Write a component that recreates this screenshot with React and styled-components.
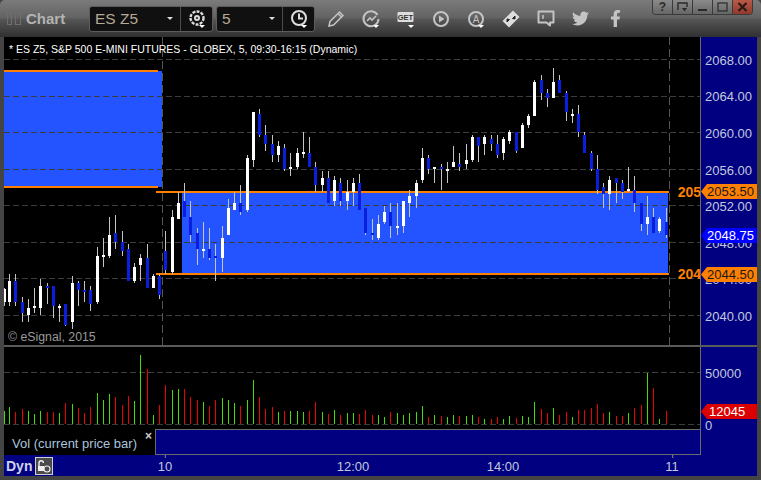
// App.jsx
import React from 'react';
import styled, { createGlobalStyle } from 'styled-components';
import { FaTwitter, FaFacebookF } from 'react-icons/fa';

const GlobalStyle = createGlobalStyle`
  html, body {
    margin: 0;
    padding: 0;
    background: #444;
    font-family: "Liberation Sans", Arial, sans-serif;
  }
`;

// candles as read off the chart: [x, wickTop, wickBottom, bodyTop, bodyBottom, up]
const toCandles = (x0, y0, rows) =>
  rows.map(([x, wt, wb, bt, bb, up]) => ({
    col: Math.floor(x0 + x / 3),
    wickTop: Math.round(y0 + wt / 3),
    wickBottom: Math.round(y0 + wb / 3),
    bodyTop: Math.round(y0 + bt / 3),
    bodyBottom: Math.round(y0 + bb / 3),
    up,
  }));

const candles = [
  ...toCandles(0, 180, [
    [14, 327, 380, 330, 370, 1], [28, 285, 380, 306, 369, 1], [46, 285, 380, 306, 369, 0],
    [67, 354, 429, 369, 402, 0], [85, 360, 429, 387, 408, 1], [103, 327, 402, 381, 387, 1],
    [121, 300, 408, 321, 387, 1], [142, 312, 375, 321, 327, 0], [160, 321, 417, 321, 381, 0],
    [178, 375, 429, 381, 387, 1], [196, 375, 441, 375, 438, 0], [217, 291, 450, 312, 429, 1],
    [235, 306, 381, 312, 333, 0], [253, 306, 369, 333, 339, 0], [271, 321, 396, 333, 375, 0],
    [292, 205, 375, 231, 369, 1], [310, 178, 264, 228, 234, 1], [328, 114, 237, 168, 231, 1],
    [346, 108, 210, 162, 190, 0], [367, 156, 231, 189, 216, 0], [385, 195, 306, 210, 306, 0],
    [403, 252, 312, 264, 306, 1], [421, 225, 306, 237, 258, 1], [442, 195, 327, 237, 327, 0],
    [460, 285, 327, 291, 327, 1], [478, 285, 360, 291, 348, 0], [496, 156, 285, 216, 273, 0],
    [517, 93, 285, 114, 279, 1], [535, 39, 120, 72, 120, 1], [553, 12, 115, 66, 114, 0],
    [571, 66, 190, 114, 168, 0], [592, 147, 258, 162, 210, 0], [610, 129, 237, 210, 216, 1],
    [628, 147, 243, 210, 237, 0], [646, 195, 306, 231, 237, 0], [667, 141, 279, 177, 237, 1],
    [685, 60, 168, 87, 168, 1], [703, 39, 93, 72, 93, 1],
  ]),
  ...toCandles(240, 70, [
    [2, 348, 438, 402, 429, 0], [22, 258, 429, 267, 423, 1], [40, 129, 294, 129, 273, 1],
    [58, 120, 204, 135, 198, 0], [76, 168, 246, 198, 225, 0], [97, 198, 279, 225, 258, 0],
    [115, 216, 279, 231, 258, 1], [133, 225, 306, 237, 300, 0], [151, 252, 321, 294, 300, 1],
    [172, 237, 300, 252, 294, 1], [190, 190, 267, 249, 255, 1], [208, 204, 294, 252, 294, 0],
    [226, 279, 369, 294, 348, 0], [247, 306, 369, 327, 348, 1], [265, 306, 402, 327, 402, 0],
    [283, 321, 411, 333, 396, 1], [301, 327, 411, 342, 396, 0], [322, 333, 423, 369, 396, 1],
    [340, 327, 411, 342, 369, 1], [358, 315, 423, 342, 423, 0], [376, 417, 498, 417, 492, 0],
    [397, 450, 513, 492, 498, 0], [415, 438, 513, 465, 507, 1], [433, 411, 465, 429, 459, 1],
    [451, 402, 507, 429, 471, 0], [472, 402, 498, 471, 477, 1], [490, 396, 492, 396, 471, 1],
    [508, 363, 444, 381, 402, 1], [529, 333, 417, 342, 381, 1], [547, 237, 342, 267, 333, 1],
    [565, 258, 315, 267, 300, 0], [583, 294, 342, 294, 300, 1], [604, 285, 363, 294, 300, 0],
    [622, 279, 342, 300, 306, 1], [640, 231, 294, 279, 294, 1], [658, 252, 306, 285, 294, 0],
  ]),
  ...toCandles(460, 60, [
    [19, 255, 330, 303, 315, 1], [37, 228, 309, 234, 303, 1], [55, 234, 309, 234, 261, 0],
    [73, 228, 288, 234, 255, 1], [94, 228, 276, 240, 255, 0], [112, 228, 297, 255, 288, 0],
    [130, 234, 303, 240, 282, 1], [148, 213, 255, 219, 246, 1], [169, 219, 282, 219, 276, 0],
    [187, 192, 267, 198, 267, 1], [205, 165, 207, 171, 198, 1], [223, 63, 171, 69, 171, 1],
    [244, 48, 123, 63, 102, 0], [262, 90, 144, 102, 117, 0], [280, 27, 117, 69, 117, 1],
    [298, 48, 102, 63, 102, 0], [319, 96, 186, 102, 159, 0], [337, 150, 192, 165, 171, 1],
    [355, 138, 234, 165, 219, 0], [373, 219, 282, 228, 282, 0], [394, 276, 336, 282, 330, 0],
    [412, 288, 405, 330, 393, 0], [430, 372, 447, 384, 405, 0], [448, 351, 453, 363, 405, 1],
    [469, 357, 432, 357, 372, 0], [487, 363, 420, 372, 399, 0], [505, 324, 399, 390, 396, 1],
    [523, 351, 459, 393, 432, 0], [544, 432, 516, 432, 495, 0], [562, 411, 528, 474, 495, 1],
    [580, 447, 522, 474, 522, 0], [598, 474, 522, 480, 516, 1], [619, 447, 537, 489, 528, 0],
  ]),
];

// volume bars: [x, top, green]
const toVolume = (x0, rows) =>
  rows.map(([x, top, up]) => ({ col: Math.floor(x0 + x / 3), top: Math.round(345 + top / 3), up }));

const volume = [
  ...toVolume(0, [
    [13, 201, 1], [28, 189, 1], [46, 204, 0], [67, 195, 0], [85, 201, 1], [103, 210, 1], [121, 201, 1],
    [142, 204, 0], [160, 204, 0], [178, 207, 1], [196, 177, 0], [217, 180, 1], [235, 192, 0], [253, 207, 0],
    [271, 189, 0], [292, 147, 1], [310, 168, 1], [328, 150, 1], [346, 159, 0], [367, 183, 0], [385, 156, 0],
    [403, 171, 1], [421, 33, 1], [442, 75, 0], [460, 213, 1], [478, 183, 0], [496, 123, 0], [517, 138, 1],
    [535, 135, 1], [553, 135, 0], [571, 159, 0], [592, 168, 0], [610, 174, 1], [628, 186, 0], [646, 168, 0],
    [667, 162, 1], [685, 168, 1], [703, 177, 1], [721, 186, 0], [742, 168, 1], [760, 108, 1], [778, 159, 0],
  ]),
  ...toVolume(260, [
    [16, 195, 0], [37, 189, 0], [55, 204, 1], [73, 201, 0], [91, 201, 1], [112, 201, 1], [130, 204, 1],
    [148, 201, 0], [166, 174, 0], [187, 204, 1], [205, 210, 0], [223, 198, 1], [241, 213, 0], [262, 207, 1],
    [280, 207, 1], [298, 210, 0], [316, 198, 0], [337, 213, 0], [355, 213, 1], [373, 219, 1], [391, 204, 0],
    [412, 207, 1], [430, 213, 1], [448, 207, 1], [469, 204, 1], [487, 186, 1], [505, 219, 0], [523, 213, 1],
    [544, 216, 0], [562, 219, 1], [580, 213, 1], [598, 216, 0], [619, 216, 1], [637, 213, 1], [655, 219, 0],
    [673, 225, 1], [694, 225, 0], [712, 219, 0],
  ]),
  ...toVolume(500, [
    [10, 225, 1], [28, 216, 1], [49, 222, 0], [67, 216, 1], [85, 219, 1], [103, 174, 1], [124, 195, 0],
    [142, 207, 0], [160, 192, 1], [178, 213, 0], [199, 204, 0], [217, 219, 1], [235, 198, 0], [253, 198, 0],
    [274, 192, 0], [292, 180, 0], [310, 207, 0], [328, 204, 1], [349, 216, 0], [367, 216, 0], [385, 207, 1],
    [403, 192, 0], [424, 183, 0], [442, 87, 1], [460, 132, 0], [478, 225, 1], [499, 201, 0],
  ]),
];

const priceGrid = [60, 97, 133, 170, 206, 243, 279, 316];
const priceLabels = ['2068.00', '2064.00', '2060.00', '2056.00', '2052.00', '2048.00', '2044.00', '2040.00'];

const Window = styled.div`
  width: 761px;
  height: 480px;
  box-sizing: border-box;
  padding: 0 4px 4px;
  background: #444;
  display: flex;
  flex-direction: column;
  overflow: hidden;
`;

const TitleBar = styled.div`
  height: 38px;
  margin: 0 -4px;
  padding: 0 8px 0 7px;
  box-sizing: border-box;
  display: flex;
  align-items: center;
  background: linear-gradient(#7b7b7b 0, #626262 18px, #565656 19px, #2e2e2e 38px);
  border-radius: 5px 5px 0 0;
`;

const Handle = styled.span`
  width: ${(p) => p.$w}px;
  height: 12px;
  box-sizing: border-box;
  border: 1px solid #6e6e6e;
  margin-right: 3px;
  flex: none;
`;

const Title = styled.span`
  font-size: 15px;
  font-weight: bold;
  color: #b4b4b4;
  width: 63px;
  margin-left: 2px;
`;

const Combo = styled.div`
  display: flex;
  width: ${(p) => p.$w}px;
  height: 26px;
  box-sizing: border-box;
  margin-right: 3px;
  background: #101010;
  border: 1px solid #5c5c5c;
  border-radius: 3px;
  flex: none;
`;

const ComboValue = styled.div`
  flex: 1;
  display: flex;
  align-items: center;
  justify-content: space-between;
  padding: 0 7px 0 5px;
  font-size: 15.5px;
  color: #b5aa98;
  border-right: 1px solid #4c4c4c;
`;

const Caret = styled.span`
  width: 0;
  height: 0;
  border-left: 3px solid transparent;
  border-right: 3px solid transparent;
  border-top: 3px solid #ddd;
`;

const ComboIcon = styled.div`
  width: 31px;
  display: flex;
  align-items: center;
  justify-content: center;
`;

const IconSlot = styled.div`
  width: 35px;
  height: 26px;
  display: flex;
  align-items: center;
  justify-content: center;
  color: #c4c4c4;
  flex: none;
`;

const WindowControls = styled.div`
  margin-left: auto;
  align-self: flex-start;
  height: 14px;
  display: flex;
  border: 1px solid #3a3a3a;
  border-top: none;
  border-radius: 0 0 4px 4px;
  overflow: hidden;
`;

const ControlButton = styled.div`
  width: 19px;
  display: flex;
  align-items: center;
  justify-content: center;
  font-size: 12px;
  font-weight: bold;
  color: ${(p) => (p.$close ? '#222' : '#2a2a2a')};
  background: ${(p) => (p.$close ? 'linear-gradient(#b85a48, #92392a)' : 'linear-gradient(#8a8a8a, #666)')};
  border-left: 1px solid #3a3a3a;
  &:first-child {
    border-left: none;
  }
`;

const Row = styled.div`
  display: flex;
  flex: none;
  height: ${(p) => p.$h}px;
`;

const Pane = styled.div`
  position: relative;
  width: 696px;
  height: 100%;
  background: #000;
  overflow: hidden;
  flex: none;
  svg {
    display: block;
  }
`;

const Axis = styled.div`
  position: relative;
  flex: 1;
  display: flex;
  flex-direction: column;
  padding-top: ${(p) => p.$top || 0}px;
  background: #000080;
  border-left: 1px solid #6a6a6a;
`;

const AxisLabel = styled.div`
  height: ${(p) => p.$h}px;
  flex: none;
  display: flex;
  align-items: center;
  padding-left: 4px;
  font-size: 13px;
  color: #c2c9de;
`;

const Tag = styled.div`
  position: absolute;
  left: 0;
  right: 0;
  top: ${(p) => p.$top}px;
  height: 15px;
  padding-left: ${(p) => p.$pad || 6}px;
  display: flex;
  align-items: center;
  font-size: 13px;
  color: ${(p) => p.$color};
  background: ${(p) => p.$bg};
  clip-path: polygon(0 50%, 6px 0, 100% 0, 100% 100%, 6px 100%);
`;

const ChartHeader = styled.div`
  position: absolute;
  left: 5px;
  top: 5px;
  font-size: 10.5px;
  line-height: 14px;
  color: #fff;
  white-space: nowrap;
`;

const Copyright = styled.div`
  position: absolute;
  left: 4px;
  bottom: 1px;
  font-size: 12.3px;
  color: #9a9a9a;
`;

const LevelText = styled.div`
  position: absolute;
  right: -1px;
  top: ${(p) => p.$top}px;
  font-size: 14px;
  font-weight: bold;
  color: #ff8000;
`;

const Separator = styled.div`
  height: 2px;
  flex: none;
  background: #5a5a5a;
`;

const Legend = styled.div`
  position: relative;
  width: 151px;
  flex: none;
  display: flex;
  align-items: flex-end;
  padding: 0 0 4px 8px;
  box-sizing: border-box;
  background: #000;
  font-size: 13px;
  color: #a8c4dc;
  white-space: nowrap;
`;

const CloseMark = styled.span`
  position: absolute;
  right: 3px;
  top: 0;
  font-size: 12px;
  font-weight: bold;
  color: #ccc;
`;

const LegendFill = styled.div`
  width: 546px;
  flex: none;
  box-sizing: border-box;
  background: #000080;
  border: 1px solid #6a6a6a;
`;

const AxisFill = styled.div`
  flex: 1;
  background: #000080;
`;

const TimeAxis = styled.div`
  position: relative;
  height: 21px;
  flex: none;
  display: flex;
  align-items: center;
  padding-left: 2px;
  gap: 3px;
  background: #000080;
`;

const Dyn = styled.span`
  font-size: 14px;
  font-weight: bold;
  color: #cfd2ea;
`;

const LockButton = styled.div`
  width: 16px;
  height: 16px;
  display: flex;
  align-items: center;
  justify-content: center;
  background: #4a4a4a;
  border: 1px solid #cfcfcf;
`;

const TimeLabel = styled.span`
  position: absolute;
  left: ${(p) => p.$x}px;
  top: 4px;
  transform: translateX(-50%);
  font-size: 13px;
  color: #c2c9de;
  &::before {
    content: ${(p) => (p.$tick ? '""' : 'none')};
    position: absolute;
    left: 50%;
    top: -4px;
    height: 3px;
    width: 1px;
    background: #8a8a8a;
  }
`;

const Icon = ({ size = 20, caret, children }) => (
  <svg width={size} height={size} viewBox="0 0 20 20" fill="none" stroke="currentColor" strokeWidth="2">
    {children}
    {caret && <path d="M12 16h6l-3 3z" fill="#fff" stroke="none" />}
  </svg>
);

const PriceChart = () => (
  <svg width="696" height="308" viewBox="4 38 696 308" shapeRendering="crispEdges">
    <rect x="4" y="72" width="158" height="116" fill="#2454ff" />
    <rect x="182" y="193" width="486" height="82" fill="#2454ff" />
    {priceGrid.map((y) => (
      <line key={y} x1="4" x2="700" y1={y + 0.5} y2={y + 0.5} stroke="#3c3c3c" strokeDasharray="6 3" />
    ))}
    <line x1="162.5" x2="162.5" y1="38" y2="346" stroke="#555" strokeDasharray="8 4" />
    <line x1="669.5" x2="669.5" y1="38" y2="346" stroke="#555" strokeDasharray="8 4" />
    <rect x="4" y="71" width="154" height="2" fill="#ff8000" />
    <rect x="4" y="187" width="154" height="2" fill="#ff8000" />
    <rect x="156" y="192" width="513" height="2" fill="#ff8000" />
    <rect x="156" y="274" width="513" height="2" fill="#ff8000" />
    {candles.map((c) => (
      <g key={c.col}>
        <rect x={c.col} y={c.wickTop} width="1" height={c.wickBottom - c.wickTop} fill="#c4c4c4" />
        <rect
          x={c.col - 1}
          y={c.bodyTop}
          width="3"
          height={Math.max(c.bodyBottom - c.bodyTop, 2)}
          fill={c.up ? '#fff' : '#0a1ee0'}
        />
      </g>
    ))}
  </svg>
);

const VolumeChart = () => (
  <svg width="696" height="82" viewBox="4 348 696 82" shapeRendering="crispEdges">
    {[373, 425].map((y) => (
      <line key={y} x1="4" x2="700" y1={y + 0.5} y2={y + 0.5} stroke="#3c3c3c" strokeDasharray="6 3" />
    ))}
    {volume.map((v) => (
      <rect key={v.col} x={v.col} y={v.top} width="1" height={425 - v.top} fill={v.up ? '#44dd00' : '#ee0000'} />
    ))}
  </svg>
);

const App = () => (
  <>
    <GlobalStyle />
    <Window>
      <TitleBar>
        <Handle $w={5} />
        <Handle $w={6} />
        <Title>Chart</Title>
        <Combo $w={124}>
          <ComboValue>
            ES Z5
            <Caret />
          </ComboValue>
          <ComboIcon>
            <Icon caret>
              <circle cx="10" cy="9" r="6.5" stroke="#ddd" strokeDasharray="3 1.2" strokeWidth="2.4" />
              <circle cx="10" cy="9" r="2" stroke="#ddd" />
            </Icon>
          </ComboIcon>
        </Combo>
        <Combo $w={99}>
          <ComboValue>
            5
            <Caret />
          </ComboValue>
          <ComboIcon>
            <Icon caret>
              <circle cx="10" cy="9" r="7" stroke="#ddd" />
              <path d="M10 4.5V9.5H14" stroke="#ddd" />
            </Icon>
          </ComboIcon>
        </Combo>
        <IconSlot>
          <Icon>
            <path d="M3 17l1-4.5L13.5 3l3.5 3.5L7.5 16z" strokeWidth="1.5" />
            <path d="M12 4.5l3.5 3.5" strokeWidth="1.5" />
          </Icon>
        </IconSlot>
        <IconSlot>
          <Icon caret>
            <path d="M16.5 6A7.5 7.5 0 1 0 17.5 10" />
            <path d="M6 12l3-3 2 2 4-4" strokeWidth="1.6" />
          </Icon>
        </IconSlot>
        <IconSlot>
          <Icon caret>
            <rect x="1.5" y="3" width="16" height="10" rx="1" fill="#ddd" stroke="none" />
            <text x="9.5" y="11" fontSize="7.5" fontWeight="bold" fill="#333" stroke="none" textAnchor="middle" fontFamily="Liberation Sans, sans-serif">
              GET
            </text>
          </Icon>
        </IconSlot>
        <IconSlot>
          <Icon>
            <circle cx="10" cy="10" r="7" />
            <path d="M8 6.5l5.5 3.5L8 13.5z" fill="currentColor" stroke="none" />
          </Icon>
        </IconSlot>
        <IconSlot>
          <Icon caret>
            <circle cx="10" cy="10" r="7" />
            <text x="10" y="13.5" fontSize="10" fill="currentColor" stroke="none" textAnchor="middle" fontFamily="Liberation Sans, sans-serif">
              A
            </text>
          </Icon>
        </IconSlot>
        <IconSlot>
          <Icon>
            <path d="M1.5 12L12 1.5 18.5 8 8 18.5z" fill="#ddd" stroke="none" strokeLinejoin="round" />
            <path d="M6 13l2.5-2.5-2.5-.5zM14 7l-2.5 2.5 2.5.5z" fill="#222" stroke="#222" strokeWidth="1" />
          </Icon>
        </IconSlot>
        <IconSlot>
          <Icon>
            <path d="M2.5 2.5h15v11h-3.5v3l-3.5-3h-8z" strokeLinejoin="round" />
            <path d="M7 6v4" strokeWidth="1.5" />
          </Icon>
        </IconSlot>
        <IconSlot>
          <FaTwitter size={17} />
        </IconSlot>
        <IconSlot>
          <FaFacebookF size={17} />
        </IconSlot>
        <WindowControls>
          <ControlButton>?</ControlButton>
          <ControlButton>
            <svg width="11" height="10" viewBox="0 0 11 10" fill="none" stroke="#2a2a2a" strokeWidth="1.4">
              <path d="M1 8V1h9v4" />
              <path d="M5 6h5L7.5 9.5z" fill="#2a2a2a" stroke="none" />
            </svg>
          </ControlButton>
          <ControlButton>
            <svg width="11" height="10" viewBox="0 0 11 10">
              <rect x="1" y="7" width="9" height="2" fill="#2a2a2a" />
            </svg>
          </ControlButton>
          <ControlButton>
            <svg width="11" height="10" viewBox="0 0 11 10" fill="none" stroke="#2a2a2a" strokeWidth="1.2">
              <rect x="1" y="1" width="9" height="8" />
            </svg>
          </ControlButton>
          <ControlButton $close>
            <svg width="11" height="10" viewBox="0 0 11 10" stroke="#2a1a18" strokeWidth="2.2">
              <path d="M1.5 1l8 8M9.5 1l-8 8" />
            </svg>
          </ControlButton>
        </WindowControls>
      </TitleBar>

      <Row $h={308}>
        <Pane>
          <PriceChart />
          <ChartHeader>* ES Z5, S&amp;P 500 E-MINI FUTURES - GLOBEX, 5, 09:30-16:15 (Dynamic)</ChartHeader>
          <Copyright>© eSignal, 2015</Copyright>
          <LevelText $top={147}>205</LevelText>
          <LevelText $top={229}>204</LevelText>
        </Pane>
        <Axis $top={5}>
          {priceLabels.map((label) => (
            <AxisLabel key={label} $h={36.6}>
              {label}
            </AxisLabel>
          ))}
          <Tag $top={147} $bg="#ff8000" $color="#1a1a1a">2053.50</Tag>
          <Tag $top={191} $bg="#0000ff" $color="#fff">2048.75</Tag>
          <Tag $top={230} $bg="#ff8000" $color="#1a1a1a">2044.50</Tag>
        </Axis>
      </Row>
      <Separator />
      <Row $h={82}>
        <Pane>
          <VolumeChart />
        </Pane>
        <Axis $top={18}>
          <AxisLabel $h={16}>50000</AxisLabel>
          <AxisLabel $h={36}>&nbsp;</AxisLabel>
          <AxisLabel $h={16}>0</AxisLabel>
          <Tag $top={57} $pad={8} $bg="#dd0000" $color="#fff">12045</Tag>
        </Axis>
      </Row>
      <Row $h={26}>
        <Legend>
          Vol (current price bar)
          <CloseMark>×</CloseMark>
        </Legend>
        <LegendFill />
        <AxisFill />
      </Row>
      <TimeAxis>
        <Dyn>Dyn</Dyn>
        <LockButton>
          <svg width="14" height="14" viewBox="0 0 14 14" fill="none" stroke="#eee" strokeWidth="1.4">
            <path d="M2 7V4a2.2 2.2 0 0 1 4.4 0" />
            <rect x="1" y="7" width="6" height="5" fill="#eee" stroke="none" />
            <circle cx="10" cy="10" r="3" fill="#4a4a4a" strokeWidth="1.1" />
          </svg>
        </LockButton>
        <TimeLabel $x={161} $tick>10</TimeLabel>
        <TimeLabel $x={349}>12:00</TimeLabel>
        <TimeLabel $x={499}>14:00</TimeLabel>
        <TimeLabel $x={668} $tick>11</TimeLabel>
      </TimeAxis>
    </Window>
  </>
);

export default App;
